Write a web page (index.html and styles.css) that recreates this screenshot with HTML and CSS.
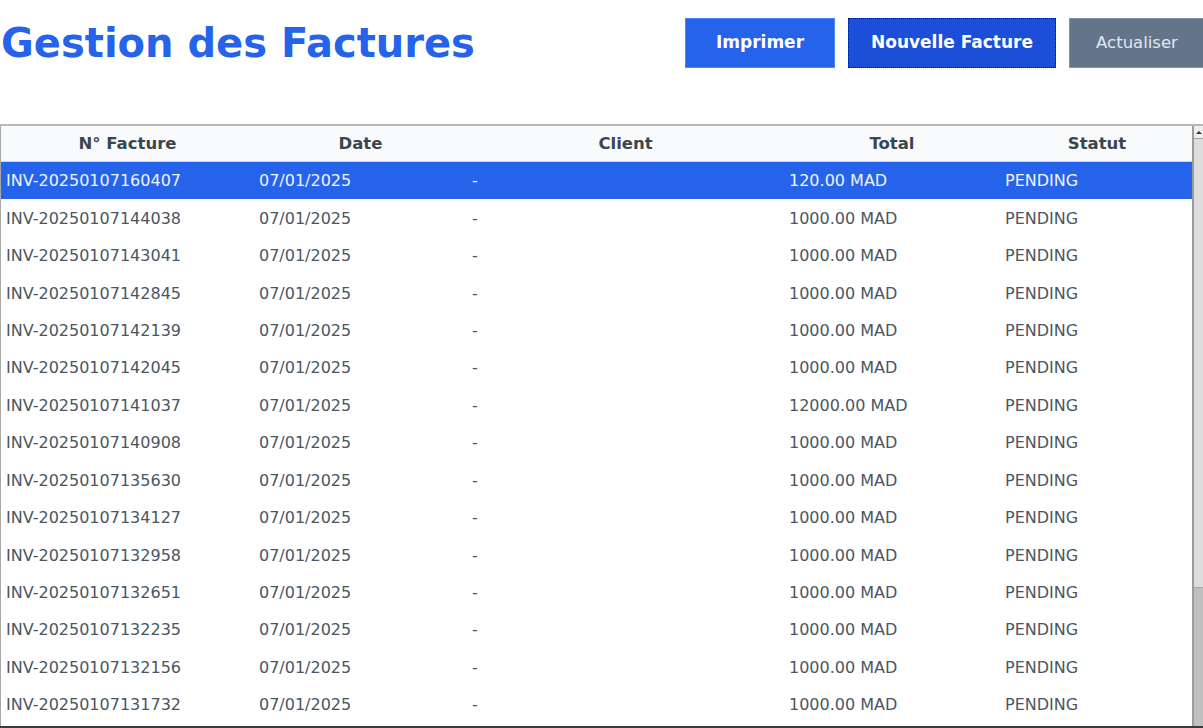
FILE: index.html
```html
<!DOCTYPE html>
<html lang="fr">
<head>
<meta charset="utf-8">
<title>Gestion des Factures</title>
<link rel="stylesheet" href="styles.css">
</head>
<body>
<div class="app">
  <header class="topbar">
    <h1 class="title">Gestion des Factures</h1>
    <div class="actions">
      <button class="btn btn-print">Imprimer</button>
      <button class="btn btn-new">Nouvelle Facture</button>
      <button class="btn btn-refresh">Actualiser</button>
    </div>
  </header>
  <div class="table-wrap">
    <div class="table-area">
      <table class="grid">
        <colgroup>
          <col class="c1"><col class="c2"><col class="c3"><col class="c4"><col class="c5">
        </colgroup>
        <thead>
          <tr><th>N° Facture</th><th>Date</th><th>Client</th><th>Total</th><th>Statut</th></tr>
        </thead>
        <tbody>
          <tr class="selected"><td>INV-20250107160407</td><td>07/01/2025</td><td>-</td><td>120.00 MAD</td><td>PENDING</td></tr>
          <tr><td>INV-20250107144038</td><td>07/01/2025</td><td>-</td><td>1000.00 MAD</td><td>PENDING</td></tr>
          <tr><td>INV-20250107143041</td><td>07/01/2025</td><td>-</td><td>1000.00 MAD</td><td>PENDING</td></tr>
          <tr><td>INV-20250107142845</td><td>07/01/2025</td><td>-</td><td>1000.00 MAD</td><td>PENDING</td></tr>
          <tr><td>INV-20250107142139</td><td>07/01/2025</td><td>-</td><td>1000.00 MAD</td><td>PENDING</td></tr>
          <tr><td>INV-20250107142045</td><td>07/01/2025</td><td>-</td><td>1000.00 MAD</td><td>PENDING</td></tr>
          <tr><td>INV-20250107141037</td><td>07/01/2025</td><td>-</td><td>12000.00 MAD</td><td>PENDING</td></tr>
          <tr><td>INV-20250107140908</td><td>07/01/2025</td><td>-</td><td>1000.00 MAD</td><td>PENDING</td></tr>
          <tr><td>INV-20250107135630</td><td>07/01/2025</td><td>-</td><td>1000.00 MAD</td><td>PENDING</td></tr>
          <tr><td>INV-20250107134127</td><td>07/01/2025</td><td>-</td><td>1000.00 MAD</td><td>PENDING</td></tr>
          <tr><td>INV-20250107132958</td><td>07/01/2025</td><td>-</td><td>1000.00 MAD</td><td>PENDING</td></tr>
          <tr><td>INV-20250107132651</td><td>07/01/2025</td><td>-</td><td>1000.00 MAD</td><td>PENDING</td></tr>
          <tr><td>INV-20250107132235</td><td>07/01/2025</td><td>-</td><td>1000.00 MAD</td><td>PENDING</td></tr>
          <tr><td>INV-20250107132156</td><td>07/01/2025</td><td>-</td><td>1000.00 MAD</td><td>PENDING</td></tr>
          <tr><td>INV-20250107131732</td><td>07/01/2025</td><td>-</td><td>1000.00 MAD</td><td>PENDING</td></tr>
        </tbody>
      </table>
    </div>
    <div class="scrollbar">
      <div class="arrow"><svg width="8" height="6" viewBox="0 0 8 6"><path d="M1 5 L4 2 L7 5 Z" fill="#333"/></svg></div>
      <div class="thumb"></div>
      <div class="track"></div>
    </div>
  </div>
</div>
</body>
</html>
```

FILE: styles.css
```css
html, body {
  margin: 0;
  padding: 0;
  background: #ffffff;
}
body {
  width: 1203px;
  height: 728px;
  overflow: hidden;
  font-family: "DejaVu Sans", "Liberation Sans", sans-serif;
}
.app {
  display: flex;
  flex-direction: column;
  height: 728px;
  border-bottom: 2px solid #3c3c3c;
  box-sizing: border-box;
}
.topbar {
  display: flex;
  align-items: flex-start;
  justify-content: space-between;
  padding-top: 18px;
  height: 124px;
  flex: none;
  box-sizing: border-box;
}
.title {
  margin: 0;
  padding-left: 1px;
  font-size: 40px;
  font-weight: bold;
  color: #2563eb;
  line-height: 50px;
  height: 50px;
}
.actions {
  display: flex;
  gap: 13px;
  margin-right: -2px;
}
.btn {
  height: 50px;
  border: 1px solid transparent;
  font-family: "DejaVu Sans", sans-serif;
  font-size: 17px;
  color: #ffffff;
  padding: 0 0 2px;
  cursor: pointer;
}
.btn-print {
  width: 150px;
  background: #2563eb;
  font-weight: bold;
  border-color: #4d86f0;
}
.btn-new {
  width: 208px;
  background: #1d4ed8;
  font-weight: bold;
  border: 1px dotted #0a1640;
}
.btn-refresh {
  width: 136px;
  background: #64748b;
  color: #e2e8f0;
  font-size: 16.5px;
  font-weight: normal;
  border-color: #8593a6;
}
.table-wrap {
  display: flex;
  flex: 1;
  border-top: 2px solid #b8b8b8;
  min-height: 0;
}
.table-area {
  width: 1194px;
  border-left: 1px solid #a8a8a8;
  box-sizing: border-box;
  overflow: hidden;
}
.grid {
  width: 1193px;
  table-layout: fixed;
  border-collapse: collapse;
  font-size: 16px;
}
.c1 { width: 253px; }
.c2 { width: 213px; }
.c3 { width: 317px; }
.c4 { width: 216px; }
.c5 { width: 194px; }
.grid th {
  height: 35px;
  padding: 0;
  background: #f8fafc;
  color: #3a464f;
  font-size: 16.5px;
  font-weight: bold;
  text-align: center;
  border-bottom: 1px solid #c7d7f2;
}
.grid td {
  height: 37.45px;
  padding: 0 0 0 5px;
  color: #4b5661;
  white-space: nowrap;
  overflow: hidden;
}
.grid tr.selected td {
  background: #2563eb;
  color: #eef3ff;
}
.scrollbar {
  width: 9px;
  display: flex;
  flex-direction: column;
  border-left: 2px solid #9c9c9c;
  background: #d6d6d6;
}
.arrow {
  height: 12px;
  background: #eeeeee;
  border-bottom: 1px solid #a0a0a0;
  display: flex;
  align-items: center;
  justify-content: center;
  overflow: hidden;
}
.thumb {
  height: 448px;
  background: #dddddd;
  border-bottom: 1px solid #a8a8a8;
}
.track {
  flex: 1;
  background: #c0c0c0;
}
```
